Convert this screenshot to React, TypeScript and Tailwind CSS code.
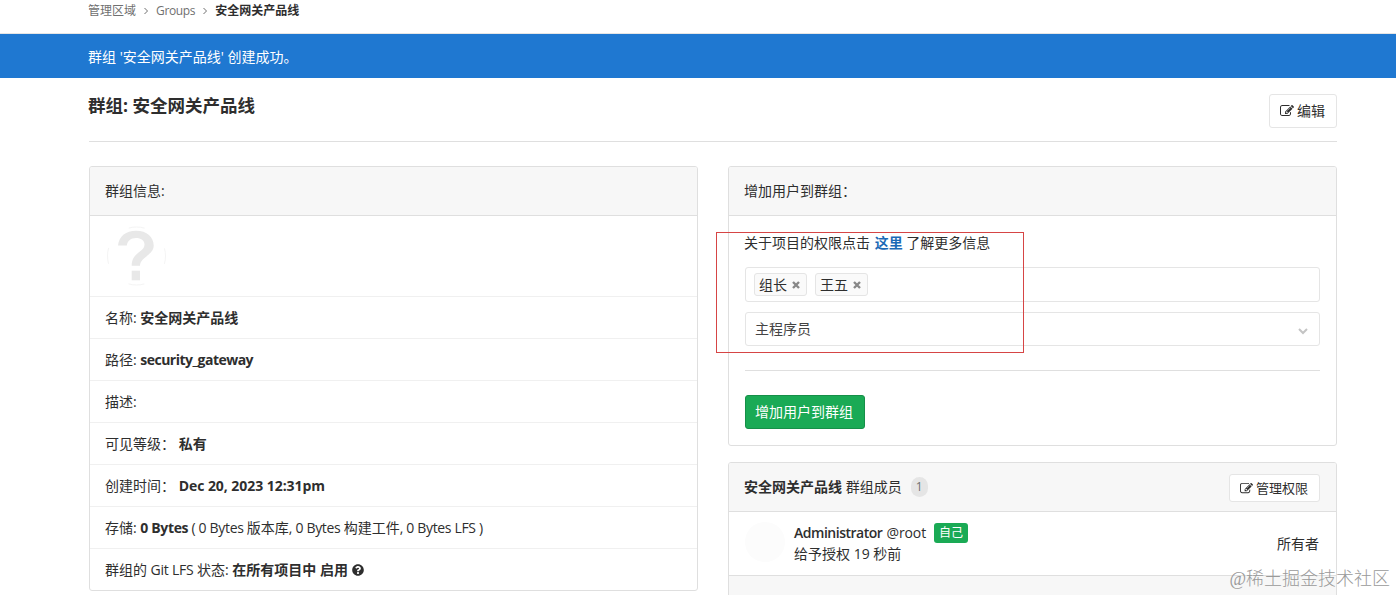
import { ReactNode } from 'react';
import { FaQuestionCircle } from 'react-icons/fa';
import { clsx } from 'clsx';

const GROUP_NAME = '安全网关产品线';

const EditIcon = ({ className }: { className?: string }) => (
  <svg viewBox="0 0 1792 1792" fill="currentColor" className={clsx('shrink-0', className)}>
    <path d="M888 1184l116-116-152-152-116 116v56h96v96h56zm440-720q-16-16-33 1l-350 350q-17 17-1 33t33-1l350-350q17-17 1-33zm80 594v190q0 119-84.5 203.5t-203.5 84.5h-832q-119 0-203.5-84.5t-84.5-203.5v-832q0-119 84.5-203.5t203.5-84.5h832q63 0 117 25 15 7 18 23 3 17-9 29l-49 49q-14 14-32 8-23-6-45-6h-832q-66 0-113 47t-47 113v832q0 66 47 113t113 47h832q66 0 113-47t47-113v-126q0-13 9-22l64-64q15-15 35-7t20 29zm-96-738l288 288-672 672h-288v-288zm444 132l-92 92-288-288 92-92q28-28 68-28t68 28l152 152q28 28 28 68t-28 68z" />
  </svg>
);

const Separator = () => (
  <svg viewBox="0 0 6 8" className="mx-[7px] h-[8px] w-[6px] fill-none stroke-[#707070]">
    <path d="M1.5 1l3 3-3 3" />
  </svg>
);

const Remove = () => (
  <svg viewBox="0 0 8 8" className="ml-[5px] mt-px h-[8px] w-[8px] fill-none stroke-[#888] stroke-[2.4]">
    <path d="M1 1l6 6M7 1l-6 6" />
  </svg>
);

const Tag = ({ name }: { name: string }) => (
  <span className="flex h-[23px] w-[53px] items-center rounded-[3px] border border-[#e5e5e5] bg-[#fafafa] pl-[4px]">
    {name}
    <Remove />
  </span>
);

const Panel = ({ header, children, className }: { header: ReactNode; children: ReactNode; className?: string }) => (
  <div className={clsx('rounded-[3px] border border-[#dfdfdf] bg-white', className)}>
    <div className="flex h-[49px] items-center rounded-t-[2px] border-b border-[#dfdfdf] bg-[#f7f7f7] px-[15px]">
      {header}
    </div>
    {children}
  </div>
);

const rows: { label: ReactNode; content: ReactNode }[] = [
  { label: '名称:', content: <b>{GROUP_NAME}</b> },
  { label: '路径:', content: <b className="tracking-[-0.53px]">security_gateway</b> },
  { label: '描述:', content: null },
  { label: '可见等级：', content: <b>私有</b> },
  { label: '创建时间：', content: <b className="tracking-[-0.05px]">Dec 20, 2023 12:31pm</b> },
  {
    label: '存储:',
    content: (
      <>
        <b className="tracking-[-0.35px]">0 Bytes</b>
        <span className="tracking-[-0.33px]"> ( 0 Bytes </span>版本库
        <span className="tracking-[-0.33px]">, 0 Bytes </span>构建工件
        <span className="tracking-[-0.33px]">, 0 Bytes LFS )</span>
      </>
    ),
  },
  {
    label: (
      <>
        群组的<span className="tracking-[-0.2px]"> Git LFS </span>状态:
      </>
    ),
    content: (
      <>
        <b>在所有项目中 启用</b> <FaQuestionCircle size={12} className="inline align-[-1px]" />
      </>
    ),
  },
];

export default function App() {
  return (
    <div className="relative h-[595px] overflow-hidden bg-white font-['Open_Sans','Noto_Sans_CJK_SC',sans-serif] text-[14px] leading-[20px] text-[#2e2e2e]">
      <nav className="flex h-[34px] items-start border-b border-[#e5e5e5] pl-[88px] pt-[1px] text-[12px] text-[#707070]">
        <div className="flex items-center">
          <span>管理区域</span>
          <Separator />
          <span className="tracking-[-0.35px]">Groups</span>
          <Separator />
          <b className="text-[#2e2e2e]">{GROUP_NAME}</b>
        </div>
      </nav>

      <div className="flex h-[44px] items-center bg-[#1f78d1] pl-[88px] pt-px text-white">
        <span>
          群组 '{GROUP_NAME}' 创建成功。
        </span>
      </div>

      <main className="pl-[89px] pr-[59px]">
        <div className="flex h-[64px] items-start justify-between border-b border-[#dfdfdf] pt-[16px]">
          <h3 className="-ml-px -mt-px text-[17.5px] font-bold leading-[24px]">群组: {GROUP_NAME}</h3>
          <button className="flex h-[34px] w-[68px] items-center rounded-[3px] border border-[#e5e5e5] pl-[10px]">
            <EditIcon className="mr-[3px] h-[14px] w-[14px]" />
            编辑
          </button>
        </div>

        <div className="mt-[24px] grid grid-cols-2 items-start gap-[30px]">
          <Panel header={<span>群组信息:</span>}>
            <div className="flex h-[81px] items-start border-b border-[#f0f0f0] pl-[16px] pt-[10px]">
              <svg viewBox="0 0 60 60" className="h-[60px] w-[60px]">
                <circle cx="30.5" cy="30" r="29" fill="none" stroke="#f4f4f4" strokeDasharray="16 29.55" strokeDashoffset="8" />
                <path
                  d="M12 19.5C13 10 20 4.7 30 4.7C41 4.7 47.7 11 47.7 19.5C47.7 29 34 31.5 34 39.7H25.7C25.7 26 38.5 26.5 38.5 18.5C38.5 14.5 35 12 30 12C25 12 21.5 14.7 20.8 19.5Z"
                  fill="#e8e8e8"
                />
                <rect x="25.7" y="44.7" width="8.3" height="9.6" fill="#e8e8e8" />
              </svg>
            </div>
            {rows.map((r, i) => (
              <div key={i} className="h-[42px] whitespace-pre border-b border-[#f0f0f0] px-[15px] pt-[11px] last:h-[41px] last:border-b-0">
                {r.label} {r.content}
              </div>
            ))}
          </Panel>

          <div className="grid gap-[16px]">
            <Panel header={<span>增加用户到群组：</span>} className="h-[280px]">
              <div className="px-[16px] pt-[17px]">
                <p className="-ml-px">
                  关于项目的权限点击 <a className="ml-px font-bold text-[#1b69b6]">这里</a> 了解更多信息
                </p>
                <div className="mt-[14px] flex h-[35px] items-center gap-[8px] rounded-[3px] border border-[#e5e5e5] pl-[8px]">
                  <Tag name="组长" />
                  <Tag name="王五" />
                </div>
                <div className="mt-[10px] flex h-[34px] items-center justify-between rounded-[3px] border border-[#e5e5e5] pl-[9px] pr-[11px] text-[#444]">
                  主程序员
                  <svg viewBox="0 0 10 8" className="mt-[3px] h-[8px] w-[10px] fill-none stroke-[#c4c4c4] stroke-2">
                    <path d="M1 2l4 4 4-4" />
                  </svg>
                </div>
                <hr className="mt-[24px] border-[#dfdfdf]" />
                <button className="mt-[24px] flex h-[34px] w-[120px] items-center rounded-[3px] border border-[#168f48] bg-[#1aaa55] pl-[9px] text-white">
                  增加用户到群组
                </button>
              </div>
            </Panel>

            <Panel
              className="h-[180px]"
              header={
                <>
                  <span>
                    <b>{GROUP_NAME}</b> 群组成员
                  </span>
                  <span className="ml-[9px] flex h-[20px] w-[17px] items-center justify-center rounded-full bg-[#e5e5e5] text-[12px] text-[#707070]">
                    1
                  </span>
                  <button className="ml-auto mr-px mt-[2px] flex h-[28px] w-[91px] items-center rounded-[3px] border border-[#e5e5e5] bg-white pl-[10px] text-[13px]">
                    <EditIcon className="mr-[3px] h-[13px] w-[13px]" />
                    管理权限
                  </button>
                </>
              }
            >
              <div className="flex h-[64px] items-center border-b border-[#dfdfdf] px-[16px]">
                <div className="-mt-[3px] h-[40px] w-[40px] rounded-full bg-[#fcfcfc]" />
                <div className="ml-[9px] mt-[-1px] leading-[21px]">
                  <div className="flex items-center">
                    <span className="font-semibold tracking-[-0.48px]">Administrator</span>
                    <span className="ml-[4px] tracking-[-0.1px]">@root</span>
                    <span className="ml-[8px] flex h-[20px] w-[34px] items-center justify-center rounded-[3px] bg-[#1aaa55] text-[12px] text-white">
                      自己
                    </span>
                  </div>
                  <div>给予授权 19 秒前</div>
                </div>
                <span className="ml-auto mr-px">所有者</span>
              </div>
              <div className="h-[66px] bg-[#f7f7f7]" />
            </Panel>
          </div>
        </div>
      </main>

      {/* highlight box over the member form */}
      <div className="absolute left-[716px] top-[232px] h-[121px] w-[308px] border border-[#d64545]" />
      <div className="absolute right-[6px] top-[567px] whitespace-nowrap font-['Liberation_Serif','Noto_Sans_CJK_SC',serif] text-[18px] font-light leading-[24px] text-[#9a9a9a]">
        @稀土掘金技术社区
      </div>
    </div>
  );
}
